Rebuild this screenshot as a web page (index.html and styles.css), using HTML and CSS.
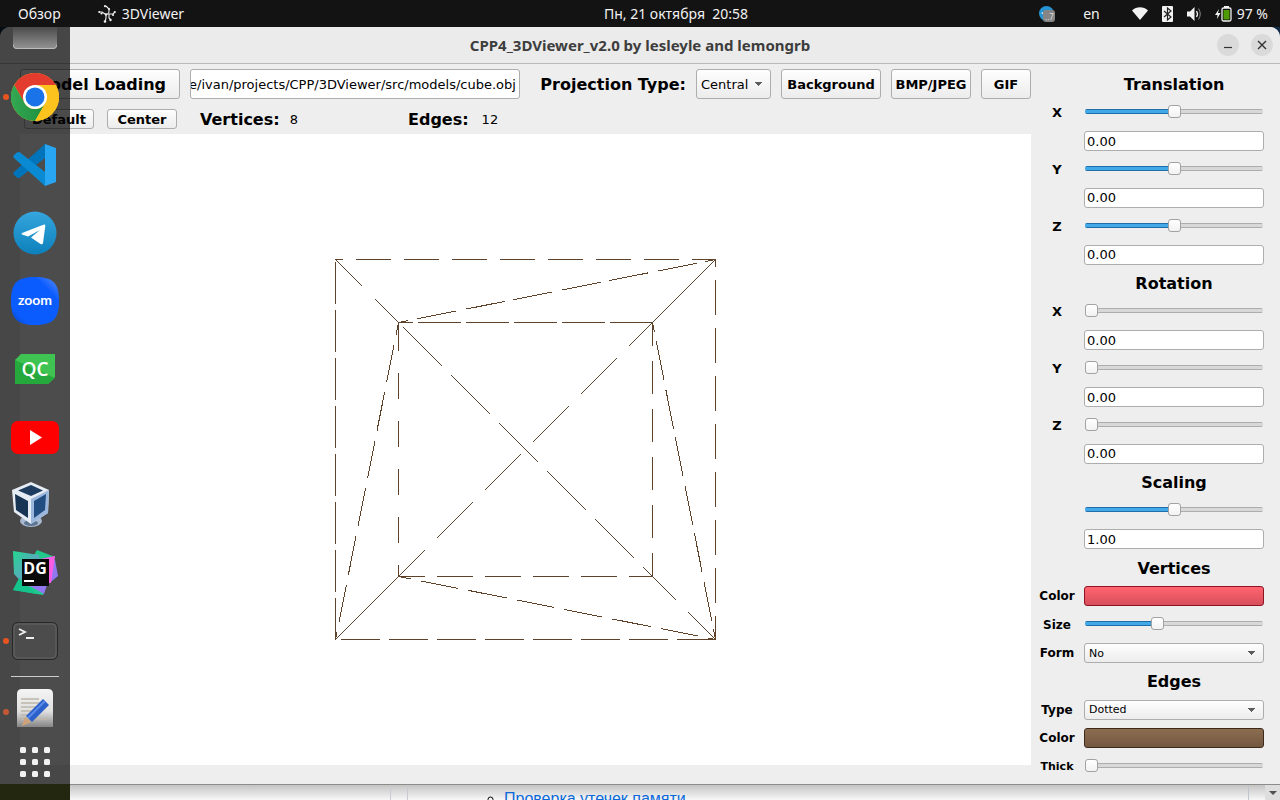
FILE: index.html
```html
<!DOCTYPE html>
<html lang="ru">
<head>
<meta charset="utf-8">
<title>3DViewer</title>
<link rel="stylesheet" href="styles.css">
</head>
<body>
<div class="desktop">
  <header class="topbar">
    <div class="topbar-left">
      <span>Обзор</span>
      <span class="app-name">
        <svg width="18" height="18" viewBox="0 0 18 18" fill="none" stroke="#eee" stroke-width="1.1"><path d="M1 7h3l3 2M7 9q4 1 4-3V4L8 1M8 9v4l-1 4M11 9h4l2-2M11 9v4l2 2"/><g fill="#eee" stroke="none"><circle cx="1.200" cy="7" r="1"/><circle cx="7" cy="1.200" r="1.100"/><circle cx="11" cy="4" r="1.100"/><circle cx="16.800" cy="7" r="1.100"/><circle cx="15" cy="10" r="1.100"/><circle cx="7" cy="16.500" r="1.300"/><circle cx="12.500" cy="15" r="1.200"/><circle cx="3.500" cy="8.500" r="1.100"/><circle cx="8" cy="9.500" r="1.200"/></g></svg>
        <span>3DViewer</span>
      </span>
    </div>
    <time class="clock">Пн, 21 октября&nbsp; 20:58</time>
    <div class="topbar-right">
      <svg width="16" height="16" viewBox="0 0 16 16"><circle cx="7.500" cy="7.500" r="7.500" fill="#2794d2"/><path d="M2 7l9-3-1 4-4 1z" fill="#fff"/><rect x="4" y="4" width="12" height="12" rx="3" fill="#858585"/><text x="6" y="14" font-size="8" fill="#ddd">..7</text></svg>
      <span class="lang">en</span>
      <svg class="wifi" width="16" height="13" viewBox="0 0 16 13"><path d="M0 3.500C4.500-.8 11.500-.8 16 3.500L8 13z" fill="#f2f2f2"/></svg>
      <svg width="11" height="16" viewBox="0 0 11 16"><rect width="11" height="16" rx="1" fill="#f2f2f2"/><path d="M2 5l7 6-3.500 3V2L9 5l-7 6" fill="none" stroke="#222" stroke-width="1.200"/></svg>
      <svg width="16" height="14" viewBox="0 0 16 14"><path d="M0 4.500h3L7.500 0v14L3 9.500H0z" fill="#f2f2f2"/><path d="M9.500 4q2 3 0 6" fill="none" stroke="#f2f2f2" stroke-width="1.300"/><path d="M11.500 1.500q3.500 5.500 0 11" fill="none" stroke="#8a8a8a"/></svg>
      <svg class="battery" width="17" height="16" viewBox="0 0 17 16"><path d="M4 3L0 9h2.500L2 13l3.500-6H3z" fill="#f2f2f2"/><rect x="9" width="5" height="2" fill="#f2f2f2"/><rect x="7" y="2" width="9" height="13" rx="1.500" fill="#111" stroke="#f2f2f2" stroke-width="1.300"/><rect x="8.500" y="4" width="6" height="9.500" fill="#4e9a06"/></svg>
      <span class="percent">97 %</span>
    </div>
  </header>

  <section class="window">
    <div class="titlebar">
      <h1 class="title">CPP4_3DViewer_v2.0 by lesleyle and lemongrb</h1>
      <div class="window-buttons">
        <button class="round" aria-label="Minimize"><svg width="22" height="22"><path d="M7 13.500h8" stroke="#333" stroke-width="1.200"/></svg></button>
        <button class="round" aria-label="Close"><svg width="22" height="22"><path d="M7 7l8 8M15 7l-8 8" stroke="#333" stroke-width="1.400"/></svg></button>
      </div>
    </div>
    <div class="content">
      <main class="workspace">
        <div class="toolbar">
          <button class="btn btn-load">Model Loading</button>
          <input class="field path" type="text" aria-label="Model path" value="e/ivan/projects/CPP/3DViewer/src/models/cube.obj">
          <label class="big projection" for="projection">Projection Type:</label>
          <select class="select select-tall" id="projection"><option>Central</option></select>
          <button class="btn btn-bg">Background</button>
          <button class="btn btn-image">BMP/JPEG</button>
          <button class="btn btn-gif">GIF</button>
        </div>
        <div class="infobar">
          <button class="btn btn-small">Default</button>
          <button class="btn btn-small">Center</button>
          <div class="stat stat-vertices"><span class="big">Vertices:</span><span>8</span></div>
          <div class="stat"><span class="big">Edges:</span><span class="edge-count">12</span></div>
        </div>
        <div class="canvas">
          <svg class="cube" width="381" height="381" viewBox="0 0 381 381">
            <path d="M0 .5H381" stroke-dasharray="35 13" stroke-dashoffset="27"/>
            <path d="M.5 3V381" stroke-dasharray="42 6"/>
            <path d="M380.500 0V381" stroke-dasharray="35 13" stroke-dashoffset="27"/>
            <path d="M6 380.500H381" stroke-dasharray="39 9"/>
            <path d="M63 63.500H318" stroke-dasharray="43 5" stroke-dashoffset="28"/>
            <path d="M63.500 63v4V318" stroke-dasharray="29 22 26 22 26 22 26 22 26 22 26"/>
            <path d="M317.500 63V318" stroke-dasharray="33 15" stroke-dashoffset="9"/>
            <path d="M63 317.500H318" stroke-dasharray="36 12" stroke-dashoffset="9"/>
            <path d="M.5 .5L63.500 63.500" pathLength="63" stroke-dasharray="27 13 23 0"/>
            <path d="M68.500 68.500L317.500 317.500" pathLength="249" stroke-dasharray="39 9"/>
            <path d="M317.500 317.500L380.500 380.500" pathLength="63" stroke-dasharray="24 12 27 0"/>
            <path d="M380.500 .5L317.500 63.500"/>
            <path d="M317.500 63.500L63.500 317.500" pathLength="254" stroke-dasharray="36 12" stroke-dashoffset="12"/>
            <path d="M63.500 317.500L.5 380.500"/>
            <path d="M63.500 63.500L380.500 .5" pathLength="317" stroke-dasharray="39 9" stroke-dashoffset="29"/>
            <path d="M63.500 63.500L.5 380.500" pathLength="317" stroke-dasharray="38 10" stroke-dashoffset="26"/>
            <path d="M317.500 63.500L380.500 380.500" pathLength="317" stroke-dasharray="39 9" stroke-dashoffset="29"/>
            <path d="M63.500 317.500L380.500 380.500" pathLength="317" stroke-dasharray="38 10" stroke-dashoffset="26"/>
          </svg>
        </div>
      </main>
      <aside class="panel">
        <h2>Translation</h2>
        <label for="tx">X</label><input id="tx" type="range" value="50" style="--fill:50%">
        <input class="field value" type="text" aria-label="Translation X" value="0.00">
        <label for="ty">Y</label><input id="ty" type="range" value="50" style="--fill:50%">
        <input class="field value" type="text" aria-label="Translation Y" value="0.00">
        <label for="tz">Z</label><input id="tz" type="range" value="50" style="--fill:50%">
        <input class="field value" type="text" aria-label="Translation Z" value="0.00">
        <h2>Rotation</h2>
        <label for="rx">X</label><input id="rx" type="range" value="0" style="--fill:0%">
        <input class="field value" type="text" aria-label="Rotation X" value="0.00">
        <label for="ry">Y</label><input id="ry" type="range" value="0" style="--fill:0%">
        <input class="field value" type="text" aria-label="Rotation Y" value="0.00">
        <label for="rz">Z</label><input id="rz" type="range" value="0" style="--fill:0%">
        <input class="field value" type="text" aria-label="Rotation Z" value="0.00">
        <h2>Scaling</h2>
        <input type="range" aria-label="Scaling" value="50" style="--fill:50%">
        <input class="field value" type="text" aria-label="Scaling value" value="1.00">
        <h2>Vertices</h2>
        <label class="small" for="vc">Color</label><button id="vc" class="swatch swatch-red"></button>
        <label class="small" for="vs">Size</label><input id="vs" type="range" value="40" style="--fill:40%">
        <label class="small" for="vf">Form</label><select class="select" id="vf"><option>No</option></select>
        <h2>Edges</h2>
        <label class="small" for="et">Type</label><select class="select" id="et"><option>Dotted</option></select>
        <label class="small" for="ec">Color</label><button id="ec" class="swatch swatch-brown"></button>
        <label class="tiny" for="ek">Thick</label><input id="ek" type="range" value="0" style="--fill:0%">
      </aside>
    </div>
  </section>

  <div class="behind">
    <div class="page-gutter"></div>
    <div class="page-gap"></div>
    <div class="page-body"><ul><li><a href="#leaks">Проверка утечек памяти</a></li></ul></div>
    <div class="page-edge"></div>
    <div class="scroll-corner"><svg width="8" height="4"><path d="M0 0h8L4 4z" fill="#505050"/></svg></div>
  </div>

  <nav class="dock">
    <div class="item item-cut"><svg width="44" height="22" viewBox="0 0 44 22"><defs><linearGradient id="cut" x2="0" y2="1"><stop stop-color="#4b4b4b"/><stop offset="1" stop-color="#949494"/></linearGradient></defs><path d="M0 0h44v18a4 4 0 0 1-4 4H4a4 4 0 0 1-4-4z" fill="url(#cut)"/><path d="M0 17q0 4.500 4 4.500h36q4 0 4-4.500" fill="none" stroke="#bbb"/></svg></div>
    <div class="item running"><svg viewBox="0 0 48 48"><defs><linearGradient id="cg" x2="1"><stop stop-color="#34a853"/><stop offset="1" stop-color="#1e8e3e"/></linearGradient></defs><circle cx="24" cy="24" r="24" fill="#fcc31e"/><path d="M24 24L13.600 30 3.200 12A24 24 0 0 1 44.800 12H24z" fill="#e33b2e"/><path d="M3.200 12L13.600 30A12 12 0 0 0 34.400 30L24 48A24 24 0 0 1 3.200 12z" fill="url(#cg)"/><path d="M24 12h20.800A24 24 0 0 1 24 48L34.400 30z" fill="#fcc31e"/><circle cx="24" cy="24" r="12" fill="#fff"/><circle cx="24" cy="24" r="9.500" fill="#1a73e8"/></svg></div>
    <div class="item"><svg viewBox="0 0 48 48"><path d="M34 3L3 31q-1.500 1.500 0 3l3 2.500q1.500 1 3 0L34 17z" fill="#0074ba"/><path d="M34 45L3 17q-1.500-1.500 0-3l3-2.500q1.500-1 3 0L34 31z" fill="#0a8ad2"/><path d="M34 3l11 4v34l-11 4z" fill="#29a6f2"/></svg></div>
    <div class="item"><svg viewBox="0 0 48 48"><defs><linearGradient id="tg" x2="0" y2="1"><stop stop-color="#35a6de"/><stop offset="1" stop-color="#0d80bb"/></linearGradient></defs><circle cx="24" cy="24" r="21.500" fill="url(#tg)"/><path d="M11 24L33 15.500q1.500-.5 1.300 1.500l-2.300 17q-.5 2-2.500 1L20 28.500l9-7.500-12 6.500-6-2q-1-.5 0-1.500z" fill="#fff"/></svg></div>
    <div class="item"><svg viewBox="0 0 48 48"><defs><linearGradient id="zg" x1="1" x2="0" y2="1"><stop stop-color="#5f91f5"/><stop offset=".25" stop-color="#0b5cff"/><stop offset=".8" stop-color="#0b5cff"/><stop offset="1" stop-color="#0845b5"/></linearGradient></defs><path d="M24 0C42 0 48 6 48 24S42 48 24 48 0 42 0 24 6 0 24 0z" fill="url(#zg)"/><text class="zoom-text" x="24" y="28" text-anchor="middle">zoom</text></svg></div>
    <div class="item"><svg viewBox="0 0 48 48"><path d="M10 9h34v23l-7 7H4V15z" fill="#3fc453"/><path d="M4 15l40 18-7 6H4z" fill="#26a93c"/><text class="qc-text" x="24" y="31" text-anchor="middle">QC</text></svg></div>
    <div class="item"><svg viewBox="0 0 48 48"><rect x="0" y="8" width="48" height="33" rx="7" fill="#f00"/><path d="M19 17l12 7.500L19 32z" fill="#fff"/></svg></div>
    <div class="item"><svg viewBox="0 0 48 48"><ellipse cx="20" cy="40" rx="11" ry="6" fill="#a9b9cf"/><ellipse cx="20" cy="42" rx="7" ry="3" fill="#5d7592"/><path d="M20 1l18 8-1 23-17 11L3 31 1 9z" fill="#e6ecf3"/><path d="M38 9l-1 23-17 11V18z" fill="#9cb7dc"/><path d="M20 4l12 5.500L20 15 7 9.500z" fill="#1d3c60"/><path d="M4 13l13 7v17L5 29z" fill="#173454"/><path d="M35 13l-12 7v17l11-8z" fill="#214d80"/></svg></div>
    <div class="item"><svg viewBox="0 0 48 48"><defs><linearGradient id="dg" x2="1" y2="1"><stop stop-color="#22d88f"/><stop offset="1" stop-color="#8f7bea"/></linearGradient></defs><path d="M26 1L44 8 32 46 2 41z" fill="#21c88c"/><path d="M36 10l8 1 3 16-11 9-3 9-25-14z" fill="#9278f0"/><path d="M2 2l26 4 4 30L15 38 3 25z" fill="url(#dg)"/><path d="M24 11l20-4-4 27H28z" fill="#fc5ce4"/><path d="M2 41l6-12 18 16z" fill="#14c48d"/><rect x="11" y="10" width="27" height="27" fill="#090909"/><text class="dg-text" x="24" y="25" text-anchor="middle">DG</text><path d="M13 32h10" stroke="#fff" stroke-width="2"/></svg></div>
    <div class="item running"><svg viewBox="0 0 48 48"><rect x="1.500" y="5.500" width="45" height="37" rx="5" fill="#4c4c4c" stroke="#282828"/><rect x="3" y="7" width="42" height="34" rx="4" fill="none" stroke="#626262"/><path d="M8 12l6 3-6 3M15 21h8" fill="none" stroke="#eee" stroke-width="1.800"/></svg></div>
    <div class="separator"></div>
    <div class="item item-editor running"><svg width="38" height="38" viewBox="0 0 38 38"><defs><linearGradient id="ed" x2="0" y2="1"><stop stop-color="#f5f5f5"/><stop offset=".6" stop-color="#dedede"/><stop offset="1" stop-color="#858585"/></linearGradient></defs><path d="M1 38V5q0-5 5-5h26q5 0 5 5v33z" fill="url(#ed)"/><path d="M5 10h18M5 14h20M5 18h16M5 22h13M5 26h11M5 30h28" stroke="#bdb8aa" stroke-width="1.500"/><path d="M6 37l3-9 6 5z" fill="#d0a27a"/><path d="M10 27L27 10l6 6-17 17z" fill="#2c61c9"/><path d="M12 29L29 12" stroke="#5b8bea" stroke-width="2"/></svg></div>
    <div class="item item-apps"><svg width="30" height="30" viewBox="0 0 30 30" fill="#f2f2f2"><rect width="6" height="6" rx="1.500"/><rect x="12" width="6" height="6" rx="1.500"/><rect x="24" width="6" height="6" rx="1.500"/><rect y="12" width="6" height="6" rx="1.500"/><rect x="12" y="12" width="6" height="6" rx="1.500"/><rect x="24" y="12" width="6" height="6" rx="1.500"/><rect y="24" width="6" height="6" rx="1.500"/><rect x="12" y="24" width="6" height="6" rx="1.500"/><rect x="24" y="24" width="6" height="6" rx="1.500"/></svg></div>
  </nav>
</div>
</body>
</html>
```
FILE: styles.css
```css
* { box-sizing: border-box; }
body {
  margin: 0;
  font-family: "DejaVu Sans", sans-serif;
  font-size: 13px;
  color: #000;
}
button, input, select { font: inherit; color: inherit; margin: 0; }
h1, h2 { margin: 0; }
.desktop {
  position: relative;
  display: flex;
  flex-direction: column;
  min-height: 100vh;
  overflow: hidden;
  background: #132b44;
}

/* system bar */
.topbar {
  display: flex;
  align-items: center;
  height: 27px;
  background: #131313;
  color: #f2f2f2;
  font-family: "Noto Sans", sans-serif;
  font-size: 14px;
}
.topbar-left, .topbar-right { flex: 1; display: flex; align-items: center; }
.topbar-left { gap: 37px; padding-left: 18px; }
.app-name { display: flex; align-items: center; gap: 6px; }
.clock { padding-left: 66px; }
.topbar-right { justify-content: flex-end; gap: 14px; padding-right: 12px; }
.lang { padding: 0 18px 0 14px; }
.battery { margin-left: -2px; }
.percent { margin-left: -9px; }

/* window */
.window {
  flex: 1;
  display: flex;
  flex-direction: column;
  background: #eee;
  border-radius: 10px 10px 0 0;
  border-bottom: 1px solid #8b8b88;
}
.titlebar {
  display: flex;
  align-items: center;
  height: 37px;
  padding: 0 7px;
  background: #ebebeb;
  border-bottom: 1px solid #bababa;
  border-radius: 10px 10px 0 0;
}
.title {
  flex: 1;
  padding-left: 56px;
  text-align: center;
  font-family: "Noto Sans", sans-serif;
  font-size: 15px;
  line-height: 20px;
  color: #3d3d3d;
}
.window-buttons { display: flex; gap: 12px; }
.round {
  width: 22px;
  height: 22px;
  padding: 0;
  border: 0;
  border-radius: 50%;
  background: #dadada;
}
.round svg { display: block; }
.content { flex: 1; display: flex; }
.workspace {
  flex: 1;
  display: flex;
  flex-direction: column;
  padding: 5px 0 19px 20px;
}
.toolbar { display: flex; align-items: center; gap: 10px; }
.btn {
  padding: 0;
  border: 1px solid #adadad;
  border-radius: 3px;
  background: linear-gradient(#fefefe, #ececec);
  font-weight: bold;
}
.toolbar .btn, .toolbar .path, .toolbar .select { height: 30px; }
.btn-load { width: 160px; font-size: 16px; }
.btn-bg { width: 100px; }
.btn-image { width: 80px; }
.btn-gif { width: 50px; }
.field {
  border: 1px solid #adadad;
  border-radius: 3px;
  background: #fff;
}
.path { flex: 1; min-width: 0; padding: 0; text-indent: -2px; }
.big { font-size: 16px; font-weight: bold; }
.projection { padding-left: 10px; }
.select {
  appearance: none;
  width: 100%;
  height: 20px;
  padding: 0 4px;
  border: 1px solid #adadad;
  border-radius: 3px;
  background:
    linear-gradient(to bottom left, #5c5c5c 50%, transparent 50%) right 11px center / 4px 4px no-repeat,
    linear-gradient(to bottom right, #5c5c5c 50%, transparent 50%) right 7px center / 4px 4px no-repeat,
    linear-gradient(#fefefe, #ececec);
  font-size: 11px;
}
.select-tall { width: 75px; font-size: 13px; }
.infobar {
  display: flex;
  align-items: center;
  height: 20px;
  margin: 10px 0 5px;
  padding-left: 4px;
}
.btn-small { width: 70px; height: 20px; margin-right: 13px; }
.stat { display: flex; align-items: center; gap: 10px; }
.stat-vertices { width: 208px; margin-left: 10px; }
.edge-count { padding-left: 3px; }
.canvas {
  flex: 1;
  display: flex;
  align-items: center;
  justify-content: center;
  background: #fff;
}
.cube {
  fill: none;
  stroke: #5e432a;
  stroke-width: 1;
  shape-rendering: crispEdges;
}

/* settings panel */
.panel {
  display: grid;
  grid-template-columns: 36px 180px;
  grid-auto-rows: 1fr;
  column-gap: 9px;
  align-items: center;
  padding: 6px 16px 3px 8px;
}
.panel h2 {
  grid-column: 2;
  padding-top: 2px;
  font-size: 16px;
  line-height: 20px;
  text-align: center;
}
.panel label { text-align: center; font-weight: bold; }
.panel label.small { font-size: 12px; }
.panel label.tiny { font-size: 11px; }
.panel input { grid-column: 2; }
.value { width: 100%; height: 20px; padding: 0 2px; }
.panel input[type="range"] {
  appearance: none;
  width: 178px;
  height: 13px;
  margin-bottom: 2px;
  justify-self: center;
  background: none;
}
input[type="range"]::-webkit-slider-runnable-track {
  height: 5px;
  border-radius: 2px;
  background:
    linear-gradient(#1f6ea8 1px, #43a8e8 1px, #43a8e8 4px, #1f6ea8 4px) left / var(--fill) 100% no-repeat,
    linear-gradient(#adadad 1px, #d8d8d8 1px, #d8d8d8 4px, #adadad 4px);
}
input[type="range"]::-webkit-slider-thumb {
  appearance: none;
  width: 13px;
  height: 13px;
  margin-top: -4px;
  border: 1px solid #a2a2a2;
  border-radius: 3px;
  background: linear-gradient(#fff, #f2f2f2);
}
.swatch { width: 100%; height: 20px; border-radius: 3px; }
.swatch-red {
  border: 1px solid #8e1424;
  background: linear-gradient(#ff6570, #d74e5b);
}
.swatch-brown {
  border: 1px solid #3e2a1b;
  background: linear-gradient(#8c6d50, #735841);
}

/* page visible below the window */
.behind {
  display: flex;
  height: 15px;
  overflow: hidden;
  background: linear-gradient(#c4c4c4, #f8f8f8);
  font-family: "Liberation Sans", sans-serif;
  font-size: 16px;
}
.page-gutter { width: 391px; border-right: 1px solid #c8ccd0; }
.page-gap { width: 17px; border-right: 1px solid #c8ccd0; }
.page-body { flex: 1; }
.page-body ul {
  margin: 0;
  padding: 5px 0 0 96px;
  list-style: circle;
  line-height: 18px;
}
.page-body a { color: #0969da; }
.page-edge { width: 17px; border-left: 1px solid #c0c4cc; }
.scroll-corner {
  display: flex;
  justify-content: center;
  align-items: center;
  width: 15px;
  background: #dedede;
}

/* dock laid over the desktop */
.dock {
  position: absolute;
  top: 27px;
  bottom: 0;
  left: 0;
  width: 70px;
  display: flex;
  flex-direction: column;
  background: linear-gradient(to top, #24270f 16px, transparent 16px), rgba(0, 0, 0, 0.7);
}
.item {
  display: flex;
  align-items: center;
  justify-content: center;
  position: relative;
  height: 68px;
}
.item svg { width: 48px; height: 48px; }
.item-cut { height: 36px; align-items: flex-start; }
.item-cut svg { width: 44px; height: 22px; }
.running::before {
  content: "";
  position: absolute;
  left: 3px;
  top: calc(50% - 3px);
  width: 6px;
  height: 6px;
  border-radius: 50%;
  background: #e95420;
}
.separator { height: 1px; margin: 1px 11px 0; background: #ccc; }
.item-editor { height: 50px; align-items: flex-end; }
.item-editor svg { width: 38px; height: 38px; }
.item-editor::before { top: 32px; background: #c45a35; }
.item-apps { height: 70px; }
.item-apps svg { width: 30px; height: 30px; }
.zoom-text { font: bold 14px Lato, sans-serif; fill: #fff; }
.qc-text { font: 600 19px "Open Sans", sans-serif; fill: #fff; }
.dg-text { font: bold 16px "Open Sans", sans-serif; fill: #fff; }
```
